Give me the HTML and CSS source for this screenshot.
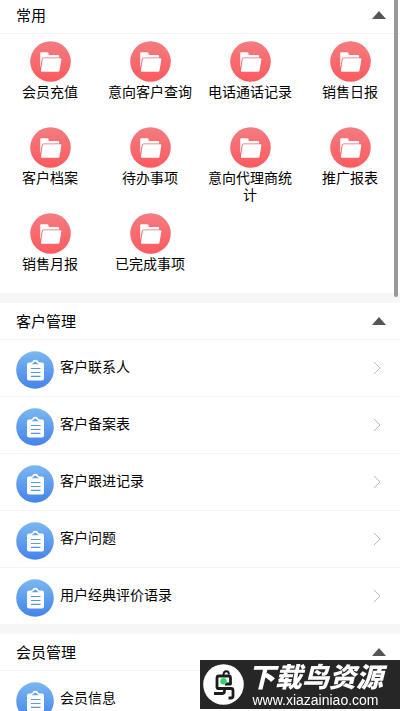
FILE: index.html
```html
<!DOCTYPE html>
<html lang="zh-CN">
<head>
<meta charset="utf-8">
<meta name="viewport" content="width=device-width, initial-scale=1">
<title>常用</title>
<link rel="stylesheet" href="styles.css">
</head>
<body>
<svg class="defs" aria-hidden="true">
  <defs>
    <linearGradient id="red" x1="0" y1="0" x2="0" y2="1"><stop offset="0" stop-color="#f37c80"/><stop offset="1" stop-color="#fd5a5e"/></linearGradient>
    <linearGradient id="blue" x1="0" y1="0" x2="0" y2="1"><stop offset="0" stop-color="#7ab8ef"/><stop offset="1" stop-color="#4583ec"/></linearGradient>
    <symbol id="folder" viewBox="0 0 41 41">
      <circle cx="20.500" cy="20.500" r="20.300" fill="url(#red)"/>
      <path d="M10.200 27V12.200q0-.9.900-.9h6.300q.8 0 1 .8l.5 1.900h9.300q.9 0 .9.900V20H12z" fill="#fff"/>
      <path d="M13.800 17.300h16.600q1.200 0 1 1.100l-1.900 11.200q-.2 1.200-1.300 1.200H12q-1.200 0-1-1.200l1.600-11.200q.2-1.100 1.200-1.100z" fill="#fff" stroke="#f3686c" stroke-width="1.800" paint-order="stroke"/>
    </symbol>
    <symbol id="clip" viewBox="0 0 38 38">
      <circle cx="19" cy="19" r="18.800" fill="url(#blue)"/>
      <rect x="11" y="11.500" width="17" height="18" rx="2" fill="#fff"/>
      <path d="M14 13.500q0-2 2.200-2.300.4-2.400 3.100-2.400t3.100 2.400q2.200.3 2.200 2.300z" fill="#fff"/>
      <path d="M15.800 13.300q.3-1.300 1.900-1.400.3-1.500 1.600-1.500t1.600 1.500q1.600.1 1.900 1.400z" fill="#5f9fed"/>
      <path d="M15 17.500h9.500M15 21.500h9.500M15 25.300h9.500" stroke="#5a96e8" stroke-width="1.200"/>
    </symbol>
  </defs>
</svg>
<main class="page">
  <section class="section">
    <button class="head head-first" type="button"><span>常用</span><span class="arrow"></span></button>
    <nav class="grid">
      <a class="tile" href="#"><svg><use href="#folder"/></svg><span>会员充值</span></a>
      <a class="tile" href="#"><svg><use href="#folder"/></svg><span>意向客户查询</span></a>
      <a class="tile" href="#"><svg><use href="#folder"/></svg><span>电话通话记录</span></a>
      <a class="tile" href="#"><svg><use href="#folder"/></svg><span>销售日报</span></a>
      <a class="tile" href="#"><svg><use href="#folder"/></svg><span>客户档案</span></a>
      <a class="tile" href="#"><svg><use href="#folder"/></svg><span>待办事项</span></a>
      <a class="tile" href="#"><svg><use href="#folder"/></svg><span>意向代理商统计</span></a>
      <a class="tile" href="#"><svg><use href="#folder"/></svg><span>推广报表</span></a>
      <a class="tile" href="#"><svg><use href="#folder"/></svg><span>销售月报</span></a>
      <a class="tile" href="#"><svg><use href="#folder"/></svg><span>已完成事项</span></a>
    </nav>
  </section>
  <section class="section">
    <button class="head" type="button"><span>客户管理</span><span class="arrow"></span></button>
    <nav class="list">
      <a class="row" href="#"><svg class="badge"><use href="#clip"/></svg><span>客户联系人</span><svg class="chev" viewBox="0 0 8 14"><path d="M1 1l6 6-6 6"/></svg></a>
      <a class="row" href="#"><svg class="badge"><use href="#clip"/></svg><span>客户备案表</span><svg class="chev" viewBox="0 0 8 14"><path d="M1 1l6 6-6 6"/></svg></a>
      <a class="row" href="#"><svg class="badge"><use href="#clip"/></svg><span>客户跟进记录</span><svg class="chev" viewBox="0 0 8 14"><path d="M1 1l6 6-6 6"/></svg></a>
      <a class="row" href="#"><svg class="badge"><use href="#clip"/></svg><span>客户问题</span><svg class="chev" viewBox="0 0 8 14"><path d="M1 1l6 6-6 6"/></svg></a>
      <a class="row" href="#"><svg class="badge"><use href="#clip"/></svg><span>用户经典评价语录</span><svg class="chev" viewBox="0 0 8 14"><path d="M1 1l6 6-6 6"/></svg></a>
    </nav>
  </section>
  <section class="section">
    <button class="head" type="button"><span>会员管理</span><span class="arrow"></span></button>
    <nav class="list">
      <a class="row" href="#"><svg class="badge"><use href="#clip"/></svg><span>会员信息</span><svg class="chev" viewBox="0 0 8 14"><path d="M1 1l6 6-6 6"/></svg></a>
    </nav>
  </section>
</main>
<div class="thumb"></div>
<aside class="mark">
  <svg class="bird" viewBox="0 0 41 41">
    <circle cx="20.500" cy="20.500" r="20.300" fill="#fff"/>
    <g fill="none" stroke="#1d1d1d" stroke-width="2.800" stroke-linejoin="round">
      <path d="M18 12h-2q-2 0-2 2v9.500q0 1 1 1h13q2 0 2 2V32q0 2-2 2h-2.500"/>
      <path d="M18 12h7.500q2 0 2 2v6h-5.500"/>
      <path d="M11 29.500h8q2.500 0 2.500-2.500v-2"/>
      <path d="M20.500 11q0-3.800 2.700-3.800T26 10.500" stroke-width="2"/>
    </g>
    <circle cx="20.500" cy="17.300" r="3.200" fill="#2fd566"/>
  </svg>
  <div class="words"><strong>下载鸟资源</strong><span>www.xiazainiao.com</span></div>
</aside>
</body>
</html>
```
FILE: styles.css
```css
* { box-sizing: border-box; }
html, body { height: 100%; }
body {
  margin: 0;
  overflow: hidden;
  background: #fff;
  color: #000;
  font-family: "Noto Sans CJK SC", sans-serif;
  font-size: 14px;
}
a { color: inherit; text-decoration: none; }
.defs { position: absolute; width: 0; height: 0; }
.section + .section { border-top: 10px solid #f6f6f6; }
.head {
  display: flex;
  align-items: center;
  justify-content: space-between;
  width: 100%;
  padding: 6px 14px 6px 16px;
  border: 0;
  border-bottom: 1px solid #f3f3f3;
  background: none;
  color: #000;
  font: inherit;
  font-size: 15px;
  line-height: 24px;
}
.head-first { padding-top: 3px; }
.arrow {
  border: 7px solid transparent;
  border-top: 0;
  border-bottom: 8px solid #555;
}
.grid {
  display: grid;
  grid-template-columns: repeat(4, 1fr);
  grid-template-rows: 86px 86px;
  grid-auto-rows: 80px;
  padding-top: 7px;
}
.tile {
  display: flex;
  flex-direction: column;
  align-items: center;
  padding: 0 6px;
  line-height: 17px;
  text-align: center;
}
.tile svg { width: 41px; height: 41px; margin-bottom: 1px; flex: none; }
.row {
  display: flex;
  align-items: center;
  gap: 6px;
  padding: 11px 19px 7px 16px;
  border-bottom: 1px solid #f5f5f5;
}
.row:last-child { border-bottom: 0; }
.row span { flex: 1; padding-bottom: 8px; line-height: 20px; }
.badge { width: 38px; height: 38px; }
.chev {
  width: 8px;
  height: 14px;
  margin-bottom: 4px;
  fill: none;
  stroke: #bbb;
  stroke-width: 1;
}
.thumb {
  position: fixed;
  top: 0;
  right: 2px;
  width: 4px;
  height: 297px;
  border-radius: 0 0 2px 2px;
  background: #999;
}
.mark {
  position: fixed;
  right: 0;
  bottom: 2px;
  display: flex;
  align-items: center;
  gap: 4px;
  width: 200px;
  height: 49px;
  padding-left: 3px;
  background: #262626;
  color: #fff;
}
.bird { width: 41px; height: 41px; flex: none; }
.words { display: flex; flex-direction: column; align-items: center; }
.words strong { font-size: 27px; font-weight: 900; font-style: italic; line-height: 30px; white-space: nowrap; }
.words span { font-family: "Liberation Sans", sans-serif; font-size: 14px; line-height: 18px; }
```
